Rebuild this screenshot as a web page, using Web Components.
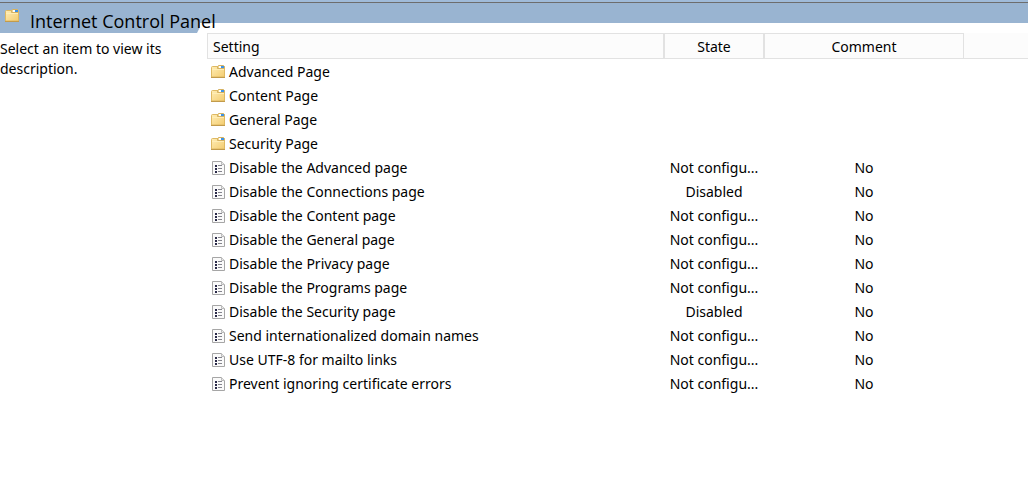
<!DOCTYPE html>
<html lang="en">
<head>
<meta charset="utf-8">
<meta name="viewport" content="width=device-width, initial-scale=1">
<title>Internet Control Panel</title>
<style>
html, body { margin: 0; min-height: 100vh; background: #fff; }
body { font: 14px/20px "Noto Sans", "Open Sans", sans-serif; color: #000; }
</style>
</head>
<body>
<policy-view>
  <panel-title slot="title">Internet Control Panel</panel-title>
  <item-description slot="description">Select an item to view its description.</item-description>
  <setting-list></setting-list>
</policy-view>

<template id="policy-view">
  <style>
    :host { display: grid; grid-template-columns: 200px minmax(0, 1fr); }
    .rule { grid-column: 1 / -1; height: 2px; background: #a0bbd9; border-bottom: 1px solid #6d6d6d; }
    .band { height: 20px; background: #99b4d1; margin-bottom: 10px; }
    main { margin-left: 7px; }
    aside, main { min-width: 0; }
    .side { display: flex; flex-direction: column; }
  </style>
  <div class="rule"></div>
  <div class="side">
    <slot name="title"></slot>
    <aside><slot name="description"></slot></aside>
  </div>
  <div>
    <div class="band"></div>
    <main><slot></slot></main>
  </div>
</template>

<template id="panel-title">
  <style>
    :host { display: flex; height: 30px; position: relative; z-index: 1; }
    :host::before { content: ""; position: absolute; inset: 0; z-index: -1; background: #99b4d1; clip-path: polygon(0 0, 100% 0, 100% 24px, 197px 100%, 0 100%); }
    folder-icon { margin: 6px 11px 0 5px; flex: none; }
    h1 { margin: 6px 0 0; font: 400 18px/24px "Open Sans", "Noto Sans", sans-serif; white-space: nowrap; }
  </style>
  <folder-icon></folder-icon><h1><slot></slot></h1>
</template>

<template id="item-description">
  <style>
    :host { display: block; padding-top: 6px; }
    p { margin: 0; max-width: 180px; }
  </style>
  <p><slot></slot></p>
</template>

<template id="folder-icon">
  <style>:host { display: block; width: 14px; height: 13px; } svg { display: block; }</style>
  <svg width="14" height="13" viewBox="0 0 14 13" aria-hidden="true">
    <defs><linearGradient id="g" x1="0" y1="0" x2="1" y2="1"><stop offset="0" stop-color="#ffedb5"/><stop offset="1" stop-color="#f3cc70"/></linearGradient></defs>
    <path d="M.5 12V2.500q0-1 1-1h12V12z" fill="url(#g)" stroke="#dfb962"/>
    <path d="M6.500 3.500v-2l1-1h5l1 1v2z" fill="#f1d48c" stroke="#d5b263"/>
    <path d="M8 1h3v2H8z" fill="#fff"/><path d="M10 1h3v2h-3z" fill="#3d93e6"/>
    <path d="M1 4h12v1H1z" fill="#ffedb5"/>
    <path d="M0 12.500h14" stroke="#c29b4c"/>
  </svg>
</template>

<template id="setting-icon">
  <style>:host { display: block; width: 13px; height: 14px; } svg { display: block; }</style>
  <svg width="13" height="14" viewBox="0 0 13 14" aria-hidden="true">
    <path d="M.5.5h9l3 3v10H.5z" fill="#fafafa" stroke="#a6a6a6"/>
    <path d="M9.500.5v3h3" fill="#e8e8e8" stroke="#bcbcbc"/>
    <path d="M3 4h2v2H3zM3 7h2v2H3zM3 10h2v2H3z" fill="#292948"/>
    <path d="M6 4.500h4M6 7.500h4M6 10.500h4" stroke="#85858d"/>
  </svg>
</template>

<template id="setting-list">
  <style>
    :host { display: block; }
    table { width: 100%; table-layout: fixed; border-collapse: separate; border-spacing: 0; }
    .setting { width: 457px; } .state { width: 100px; } .comment { width: 200px; }
    th { box-sizing: border-box; height: 26px; padding: 2px 5px 0; font-weight: 400; background: #fcfcfc; border: 1px solid #e2e2e2; }
    th:first-child { text-align: left; }
    th:last-child { border-top-color: #fcfcfc; border-left: 0; border-right: 0; }
    tbody::before { content: ""; display: table-row; height: 1px; }
    td { height: 24px; padding: 0 4px; text-align: center; white-space: nowrap; overflow: hidden; text-overflow: ellipsis; }
    .name { display: flex; align-items: center; }
    .name folder-icon { margin: 0 4px 2px 0; }
    .name setting-icon { margin: 0 4px 0 1px; }
  </style>
  <table>
    <colgroup><col class="setting"><col class="state"><col class="comment"><col></colgroup>
    <thead><tr><th scope="col">Setting</th><th scope="col">State</th><th scope="col">Comment</th><th></th></tr></thead>
    <tbody></tbody>
  </table>
</template>

<script>
class TemplateElement extends HTMLElement {
  constructor() {
    super();
    this.attachShadow({ mode: "open" }).append(document.getElementById(this.localName).content.cloneNode(true));
  }
}
const FOLDERS = ["Advanced Page", "Content Page", "General Page", "Security Page"];
const UNSET = "Not configu...";
const SETTINGS = [
  ["Disable the Advanced page", UNSET],
  ["Disable the Connections page", "Disabled"],
  ["Disable the Content page", UNSET],
  ["Disable the General page", UNSET],
  ["Disable the Privacy page", UNSET],
  ["Disable the Programs page", UNSET],
  ["Disable the Security page", "Disabled"],
  ["Send internationalized domain names", UNSET],
  ["Use UTF-8 for mailto links", UNSET],
  ["Prevent ignoring certificate errors", UNSET]
];
class SettingList extends TemplateElement {
  connectedCallback() {
    const body = this.shadowRoot.querySelector("tbody");
    if (body.rows.length) return;
    for (const name of FOLDERS) this.addRow(body, "folder-icon", name, "", "");
    for (const [name, state] of SETTINGS) this.addRow(body, "setting-icon", name, state, "No");
  }
  addRow(body, icon, name, state, comment) {
    const row = body.insertRow();
    const wrap = document.createElement("div");
    wrap.className = "name";
    const label = document.createElement("span");
    label.textContent = name;
    wrap.append(document.createElement(icon), label);
    row.insertCell().append(wrap);
    row.insertCell().textContent = state;
    row.insertCell().textContent = comment;
    row.insertCell();
  }
}
for (const name of ["folder-icon", "setting-icon", "panel-title", "item-description", "policy-view"])
  customElements.define(name, class extends TemplateElement {});
customElements.define("setting-list", SettingList);
</script>
</body>
</html>
